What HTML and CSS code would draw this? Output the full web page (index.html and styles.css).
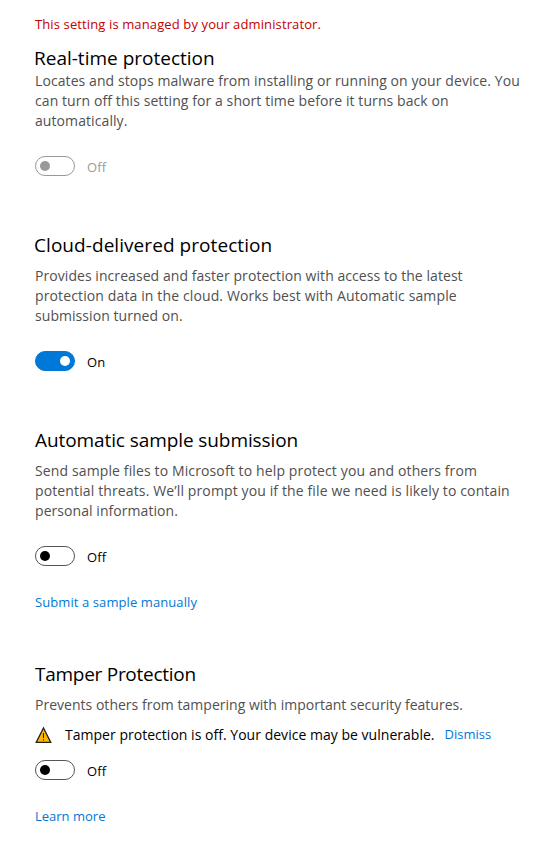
FILE: index.html
```html
<!DOCTYPE html>
<html lang="en">
<head>
<meta charset="utf-8">
<title>Virus &amp; threat protection settings</title>
<link rel="stylesheet" href="styles.css">
</head>
<body>
<main class="settings">
  <p class="managed">This setting is managed by your administrator.</p>
  <section class="group realtime">
    <h2>Real-time protection</h2>
    <p class="desc">Locates and stops malware from installing or running on your device. You<br>can turn off this setting for a short time before it turns back on<br>automatically.</p>
    <div class="switch disabled"><span class="track"><span class="thumb"></span></span><span class="state">Off</span></div>
  </section>
  <section class="group cloud">
    <h2>Cloud-delivered protection</h2>
    <p class="desc">Provides increased and faster protection with access to the latest<br><span class="wide">protection data in the cloud. Works best with Automatic sample</span><br>submission turned on.</p>
    <div class="switch on"><span class="track"><span class="thumb"></span></span><span class="state">On</span></div>
  </section>
  <section class="group sample">
    <h2>Automatic sample submission</h2>
    <p class="desc"><span class="wide">Send sample files to Microsoft to help protect you and others from</span><br><span class="wide">potential threats. We’ll prompt you if the file we need is likely to contain</span><br>personal information.</p>
    <div class="switch"><span class="track"><span class="thumb"></span></span><span class="state">Off</span></div>
    <a class="link submit">Submit a sample manually</a>
  </section>
  <section class="group tamper">
    <h2>Tamper Protection</h2>
    <p class="desc">Prevents others from tampering with important security features.</p>
    <div class="alert">
      <svg class="warn" width="18" height="18" viewBox="0 0 18 18"><path d="M8.5 2 15.8 16.4H1.2Z" fill="#ffb900" stroke="#222" stroke-width="1.3"/><path d="M8.5 7v5M8.5 13.2v1.4" stroke="#222" stroke-width="1.1"/></svg>
      <span class="message">Tamper protection is off. Your device may be vulnerable.</span>
      <a class="dismiss">Dismiss</a>
    </div>
    <div class="switch"><span class="track"><span class="thumb"></span></span><span class="state">Off</span></div>
    <a class="link">Learn more</a>
  </section>
</main>
</body>
</html>
```
FILE: styles.css
```css
* { box-sizing: border-box; }
body { margin: 0; background: #fff; color: #000; font: 14px/20px "Open Sans", "Noto Sans", sans-serif; }
.settings { height: 841px; padding: 14px 0 0 35px; overflow: hidden; white-space: nowrap; }
h2, p { margin: 0; font-weight: 400; }
h2 { font-size: 19px; line-height: 28px; }
.managed { color: #c50000; font-size: 13px; letter-spacing: 0.12px; }
.desc { color: #505050; letter-spacing: 0.06px; }
.wide { letter-spacing: 0.125px; }
.group { display: flex; flex-direction: column; align-items: flex-start; }
.realtime { margin-top: 10px; }
.realtime h2 { margin-left: -1px; }
.realtime .desc { margin-top: -1px; letter-spacing: 0.085px; }
.cloud { margin-top: 55px; }
.cloud h2 { margin-left: -1px; letter-spacing: 0.06px; }
.cloud .desc, .sample .desc, .tamper .desc { margin-top: 7px; }
.sample { margin-top: 55px; }
.sample h2 { letter-spacing: -0.09px; }
.tamper { margin-top: 48px; }
.tamper h2 { letter-spacing: -0.27px; }
.tamper .desc { letter-spacing: 0.02px; }
.switch { display: flex; align-items: center; gap: 12px; height: 20px; margin-top: 25px; font-size: 13px; }
.track { display: flex; align-items: center; width: 40px; height: 20px; padding-left: 4px; border: 1px solid #555; border-radius: 10px; }
.thumb { width: 10px; height: 10px; border-radius: 50%; background: #000; }
.state { position: relative; top: 1px; letter-spacing: 0.1px; }
.disabled { color: #999; }
.disabled .track { border-color: #999; }
.disabled .thumb { background: #999; }
.on .track { padding-left: 24px; border-color: #0078d7; background: #0078d7; }
.on .thumb { background: #fff; }
.link, .dismiss { color: #0078d7; font-size: 13px; }
.link { margin-top: 26px; }
.submit { letter-spacing: 0.09px; }
.alert { display: flex; align-items: center; height: 20px; margin-top: 10px; }
.message { margin-left: 12px; letter-spacing: 0.025px; }
.dismiss { margin: 0 0 2px 10px; }
.tamper .switch { margin-top: 15px; }
```
